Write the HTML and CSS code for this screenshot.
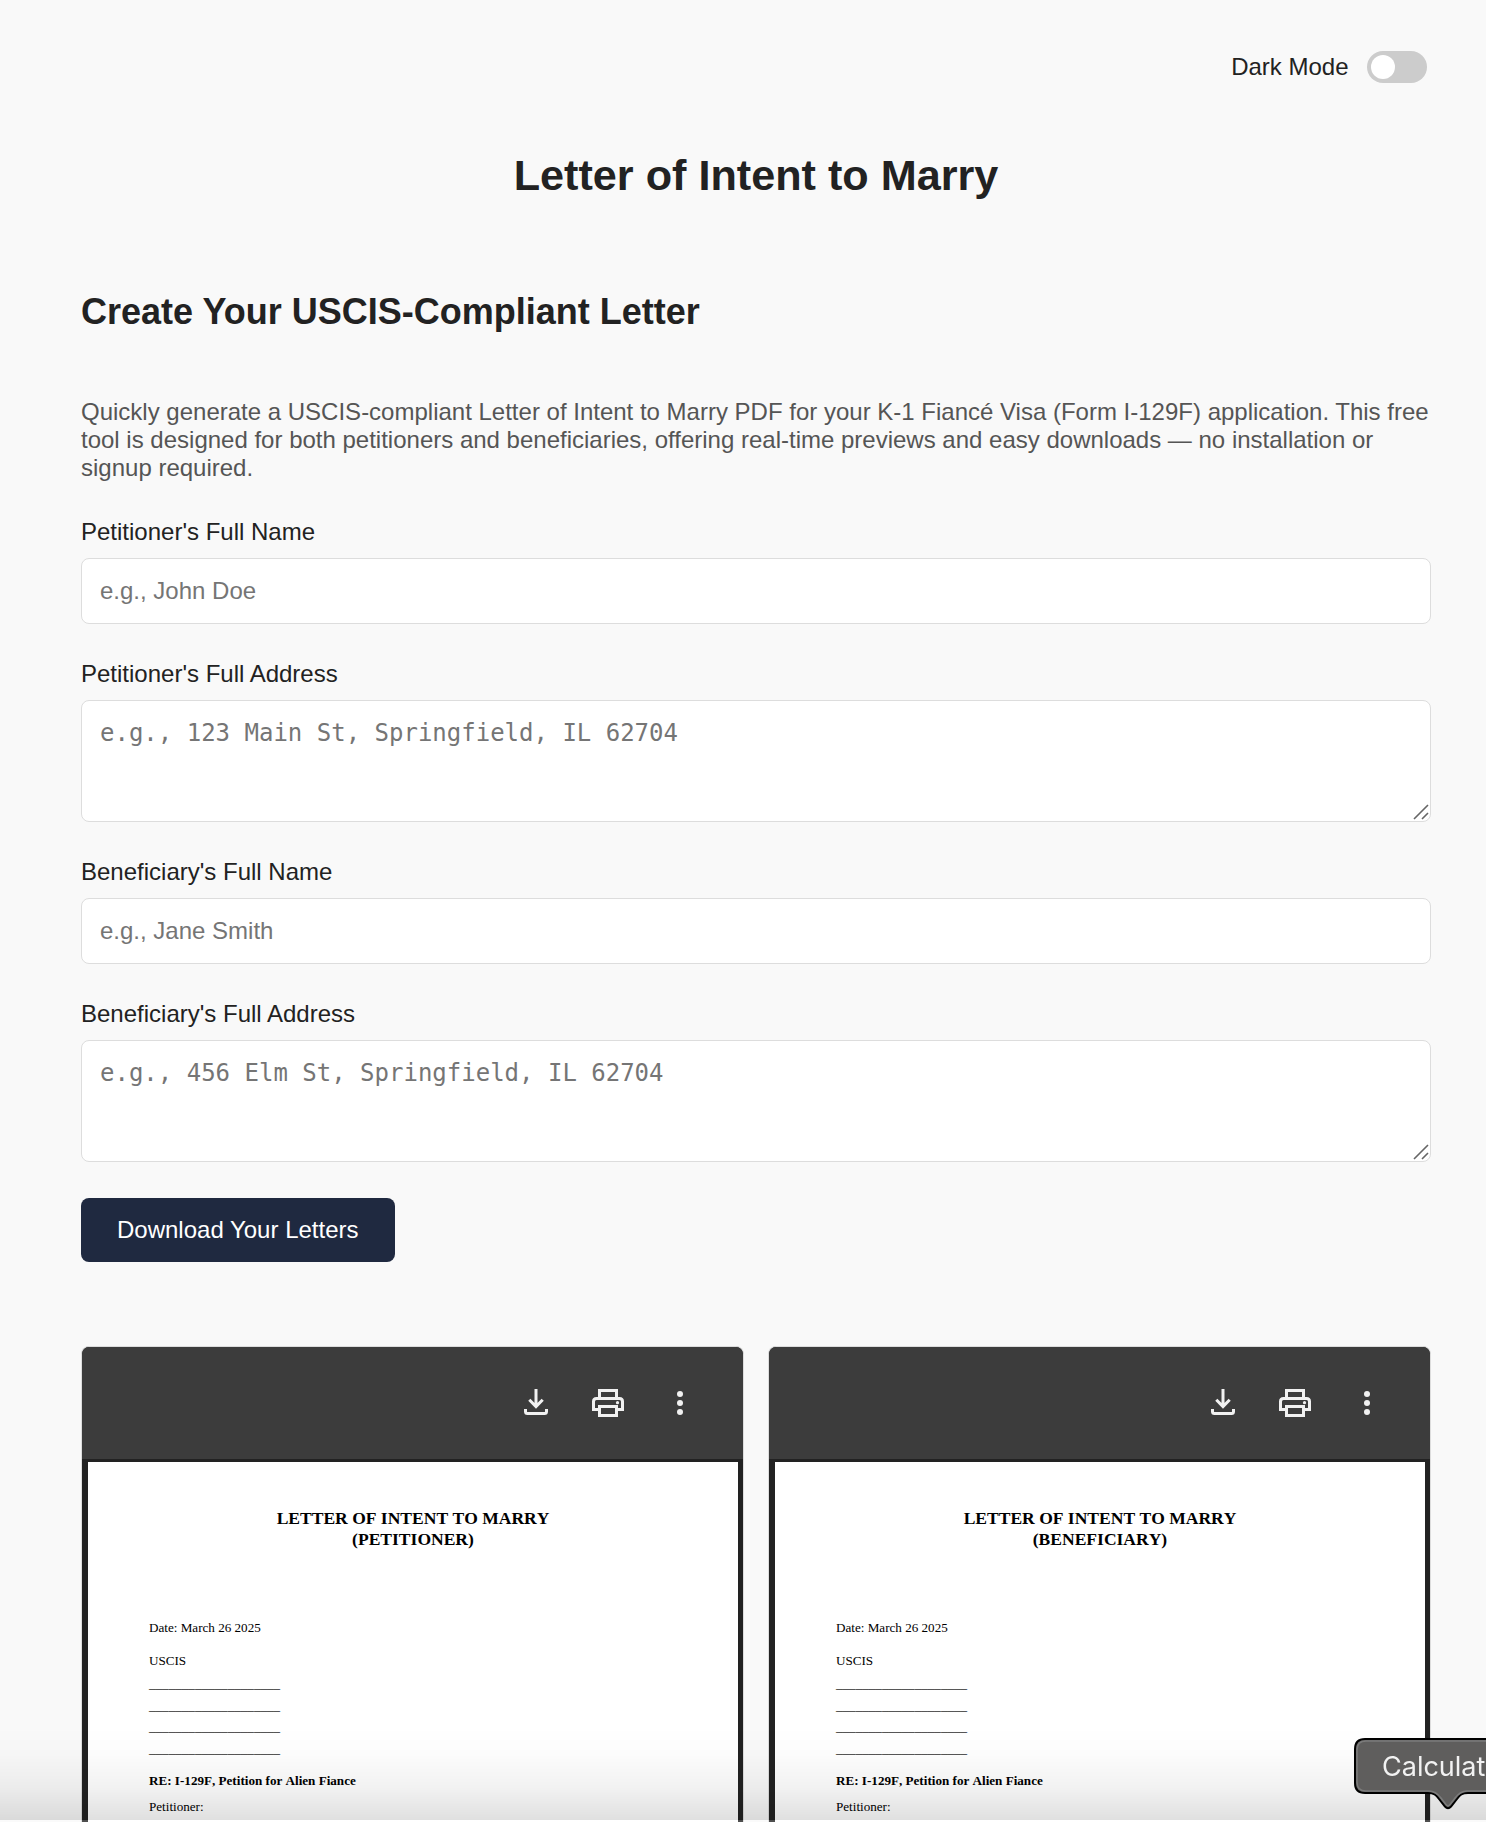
FILE: index.html
```html
<!DOCTYPE html>
<html lang="en">
<head>
<meta charset="utf-8">
<title>Letter of Intent to Marry</title>
<link rel="stylesheet" href="styles.css">
</head>
<body>
<svg class="sprite" width="0" height="0" aria-hidden="true">
  <symbol id="i-download" viewBox="0 0 36 36">
    <path d="M18 4V21M11.3 14.7L18 21.6L24.7 14.7" stroke-width="3"/>
    <path d="M7.5 24V26.5Q7.5 28.5 9.5 28.5H26.5Q28.5 28.5 28.5 26.5V24" stroke-width="3"/>
  </symbol>
  <symbol id="i-print" viewBox="0 0 36 36">
    <path d="M9.5 12V5.5H26.5V12M9.5 24.5H3.5V16.5Q3.5 13.5 6.5 13.5H29.5Q32.5 13.5 32.5 16.5V24.5H26.5M9.5 21.5H26.5V30.5H9.5Z" stroke-width="3"/>
    <circle class="dot" cx="27.5" cy="17.7" r="1.6"/>
  </symbol>
  <symbol id="i-more" viewBox="0 0 36 36">
    <circle class="dot" cx="18" cy="9" r="3"/>
    <circle class="dot" cx="18" cy="18" r="3"/>
    <circle class="dot" cx="18" cy="27" r="3"/>
  </symbol>
  <symbol id="i-grip" viewBox="0 0 16 16">
    <path d="M1 15L15 1M9 15L15 9" stroke-width="1.6"/>
  </symbol>
</svg>

<main class="container">
  <header class="topbar">
    <span>Dark Mode</span>
    <span class="switch"><span class="knob"></span></span>
  </header>
  <h1 class="title">Letter of Intent to Marry</h1>
  <h2 class="subtitle">Create Your USCIS-Compliant Letter</h2>
  <p class="intro">Quickly generate a USCIS-compliant Letter of Intent to Marry PDF for your K-1 Fiancé Visa (Form I-129F) application. This free tool is designed for both petitioners and beneficiaries, offering real-time previews and easy downloads — no installation or signup required.</p>

  <form class="form">
    <div class="field">
      <label for="pname">Petitioner's Full Name</label>
      <input class="control" id="pname" type="text" placeholder="e.g., John Doe">
    </div>
    <div class="field">
      <label for="paddr">Petitioner's Full Address</label>
      <div class="area">
        <textarea class="control mono" id="paddr" rows="3" placeholder="e.g., 123 Main St, Springfield, IL 62704"></textarea>
        <svg class="grip"><use href="#i-grip"/></svg>
      </div>
    </div>
    <div class="field">
      <label for="bname">Beneficiary's Full Name</label>
      <input class="control" id="bname" type="text" placeholder="e.g., Jane Smith">
    </div>
    <div class="field">
      <label for="baddr">Beneficiary's Full Address</label>
      <div class="area">
        <textarea class="control mono" id="baddr" rows="3" placeholder="e.g., 456 Elm St, Springfield, IL 62704"></textarea>
        <svg class="grip"><use href="#i-grip"/></svg>
      </div>
    </div>
    <button class="download" type="button">Download Your Letters</button>
  </form>

  <section class="previews">
    <article class="viewer">
      <div class="toolbar">
        <svg class="icon"><use href="#i-download"/></svg>
        <svg class="icon"><use href="#i-print"/></svg>
        <svg class="icon"><use href="#i-more"/></svg>
      </div>
      <div class="canvas">
        <div class="sheet">
          <h3 class="letter-title">LETTER OF INTENT TO MARRY<br>(PETITIONER)</h3>
          <p class="date">Date: March 26 2025</p>
          <p class="agency">USCIS</p>
          <p class="blanks">____________________<br>____________________<br>____________________<br>____________________</p>
          <p class="re">RE: I-129F, Petition for Alien Fiance</p>
          <p class="party">Petitioner:</p>
        </div>
      </div>
    </article>
    <article class="viewer">
      <div class="toolbar">
        <svg class="icon"><use href="#i-download"/></svg>
        <svg class="icon"><use href="#i-print"/></svg>
        <svg class="icon"><use href="#i-more"/></svg>
      </div>
      <div class="canvas">
        <div class="sheet">
          <h3 class="letter-title">LETTER OF INTENT TO MARRY<br>(BENEFICIARY)</h3>
          <p class="date">Date: March 26 2025</p>
          <p class="agency">USCIS</p>
          <p class="blanks">____________________<br>____________________<br>____________________<br>____________________</p>
          <p class="re">RE: I-129F, Petition for Alien Fiance</p>
          <p class="party">Petitioner:</p>
        </div>
      </div>
    </article>
  </section>
</main>

<div class="shade"></div>
<div class="tooltip">
  <svg class="bubble" viewBox="0 0 132 80">
    <path class="outer" d="M150 1H11Q1 1 1 11V45Q1 55 11 55H74C80 55 82 57 85 61L91 68.500Q94 72 97 68.500L103 61C106 57 108 55 114 55H150Z"/>
    <path class="inner" d="M150 3H12Q3 3 3 12V44Q3 53 12 53H75C81 53 84 56 87 60L92 66.500Q94 69 96 66.500L101 60C104 56 107 53 113 53H150"/>
  </svg>
  <span class="tooltip-text">Calculat</span>
</div>
</body>
</html>
```

FILE: styles.css
```css
* { box-sizing: border-box; margin: 0; }

body {
  height: 1822px;
  overflow: hidden;
  background: #f9f9f9;
  color: #222;
  font: 24px/28px "Liberation Sans", Arial, sans-serif;
}

.sprite { position: absolute; }
symbol path { fill: none; stroke: currentColor; }
.dot { fill: currentColor; }

.container {
  width: 1350px;
  margin-left: 81px;
  padding-top: 51px;
}

.topbar {
  display: flex;
  justify-content: flex-end;
  align-items: center;
  gap: 18.5px;
  height: 32px;
  padding-right: 4px;
}

.switch {
  display: flex;
  width: 60px;
  height: 32px;
  padding: 4px;
  border-radius: 16px;
  background: #ccc;
}
.knob { width: 24px; height: 24px; border-radius: 50%; background: #fff; }

.title {
  margin-top: 67px;
  font-size: 43.2px;
  line-height: 50px;
  text-align: center;
}

.subtitle {
  margin-top: 91px;
  font-size: 36px;
  line-height: 42px;
}

.intro { margin-top: 65px; color: #555; }

.form {
  display: flex;
  flex-direction: column;
  align-items: flex-start;
  gap: 36px;
  margin-top: 36px;
}
.field {
  display: flex;
  flex-direction: column;
  gap: 12px;
  width: 100%;
}
.control {
  display: block;
  width: 100%;
  padding: 18px;
  border: 1px solid #ddd;
  border-radius: 8px;
  background: #fff;
  font: inherit;
}
input.control { height: 66px; }
.control::placeholder { color: #757575; }
.area { position: relative; }
.mono {
  height: 122px;
  resize: none;
  overflow: hidden;
  font-family: "DejaVu Sans Mono", monospace;
}
.grip {
  position: absolute;
  right: 2px;
  bottom: 2px;
  width: 16px;
  height: 16px;
  color: #666;
}

.download {
  height: 64px;
  padding: 18px 36px;
  border: 0;
  border-radius: 8px;
  background: #1f2940;
  color: #fff;
  font: inherit;
}

.previews {
  display: grid;
  grid-template-columns: 1fr 1fr;
  gap: 24px;
  margin-top: 84px;
}
.viewer {
  height: 476px;
  overflow: hidden;
  border: 1px solid #ddd;
  border-bottom: 0;
  border-radius: 8px 8px 0 0;
  background: #222;
}
.toolbar {
  display: flex;
  justify-content: flex-end;
  align-items: center;
  gap: 36px;
  height: 112px;
  padding-right: 45px;
  background: #3c3c3c;
}
.icon { width: 36px; height: 36px; color: #f1f1f1; }
.canvas { padding: 3px 5px 0 6px; }
.sheet {
  height: 360px;
  padding: 46px 61px 0;
  background: #fff;
  color: #000;
  font: 13.12px/16px "Liberation Serif", "Times New Roman", serif;
}
.letter-title {
  font-size: 17.55px;
  line-height: 21px;
  text-align: center;
  font-kerning: none;
}
.date { margin-top: 70px; }
.agency { margin-top: 17px; }
.blanks { margin-top: 4px; line-height: 21.6px; }
.re { margin-top: 14px; font-weight: bold; font-kerning: none; }
.party { margin-top: 10px; }

.shade {
  position: fixed;
  left: 0;
  right: 0;
  bottom: 0;
  height: 96px;
  border-bottom: 2px solid rgba(255, 255, 255, 0.2);
  background: linear-gradient(rgba(0, 0, 0, 0), rgba(0, 0, 0, 0.01) 30%, rgba(0, 0, 0, 0.05) 65%, rgba(0, 0, 0, 0.12));
}

.tooltip {
  position: fixed;
  left: 1354px;
  top: 1738px;
  width: 132px;
  height: 80px;
  overflow: hidden;
}
.bubble { position: absolute; left: 0; top: 0; width: 132px; height: 80px; }
.outer { fill: #5f5e5d; stroke: #000; stroke-width: 2; }
.inner { fill: none; stroke: #7b7b7b; stroke-width: 1.5; }
.tooltip-text {
  position: absolute;
  left: 28px;
  top: 11px;
  color: #f2f2f2;
  font: 27px/36px Inter, sans-serif;
}
```
